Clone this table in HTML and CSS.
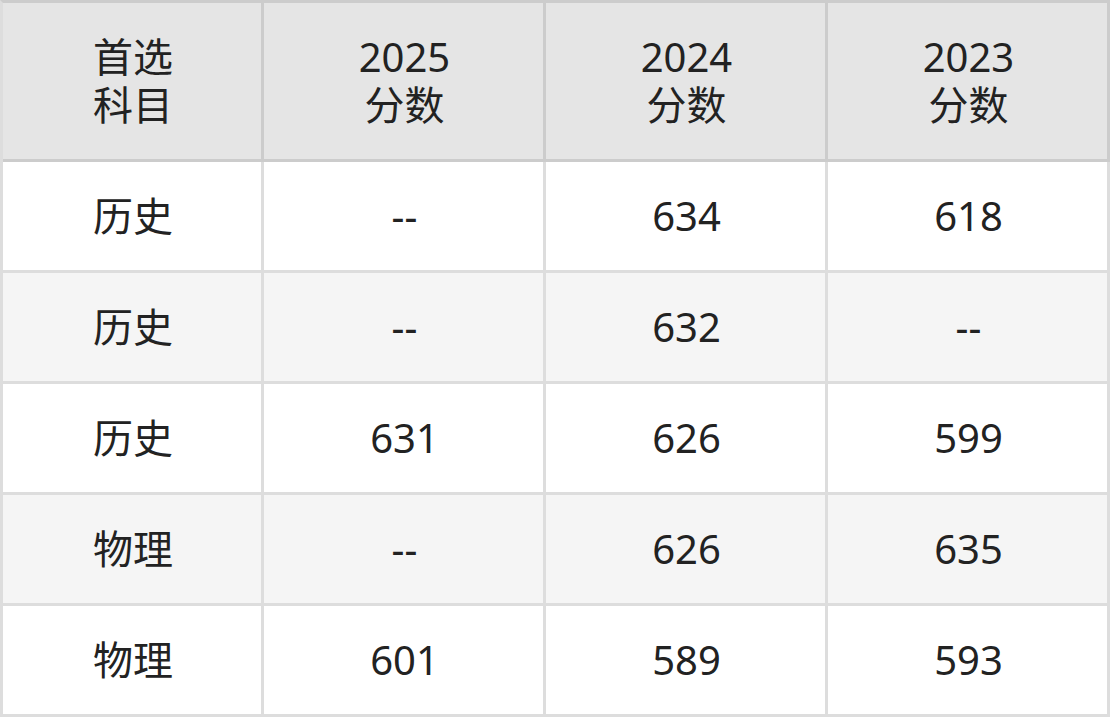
FILE: index.html
```html
<!DOCTYPE html>
<html lang="zh">
<head>
    <meta charset="UTF-8">
    <title>分数</title>
    <link rel="stylesheet" href="styles.css">
</head>
<body>
    <table class="score-table">
        <thead>
            <tr>
                <th class="col-subject">首选<br>科目</th>
                <th>2025<br>分数</th>
                <th>2024<br>分数</th>
                <th>2023<br>分数</th>
            </tr>
        </thead>
        <tbody>
            <tr><td>历史</td><td>--</td><td>634</td><td>618</td></tr>
            <tr><td>历史</td><td>--</td><td>632</td><td>--</td></tr>
            <tr><td>历史</td><td>631</td><td>626</td><td>599</td></tr>
            <tr><td>物理</td><td>--</td><td>626</td><td>635</td></tr>
            <tr><td>物理</td><td>601</td><td>589</td><td>593</td></tr>
        </tbody>
    </table>
</body>
</html>
```

FILE: styles.css
```css
body {
    margin: 0;
    background-color: #fff;
    font-family: "Noto Sans", "Noto Sans CJK SC", sans-serif;
    color: #222;
}

.score-table {
    width: 1110px;
    border-collapse: separate;
    border-spacing: 0;
    border-left: 3px solid #ddd;
    border-top: 3px solid #ccc;
    table-layout: fixed;
}

.score-table th,
.score-table td {
    padding: 0 0 0 2px;
    text-align: center;
    font-weight: normal;
    font-size: 40px;
    line-height: 48px;
    border-right: 3px solid #ddd;
    border-bottom: 3px solid #ddd;
}

.score-table th {
    height: 156px;
    background-color: #e5e5e5;
    border-color: #ccc;
}

.score-table th.col-subject {
    width: 256px;
}

.score-table td {
    height: 108px;
    background-color: #fff;
}

.score-table tbody tr:nth-child(even) td {
    background-color: #f5f5f5;
}
```
